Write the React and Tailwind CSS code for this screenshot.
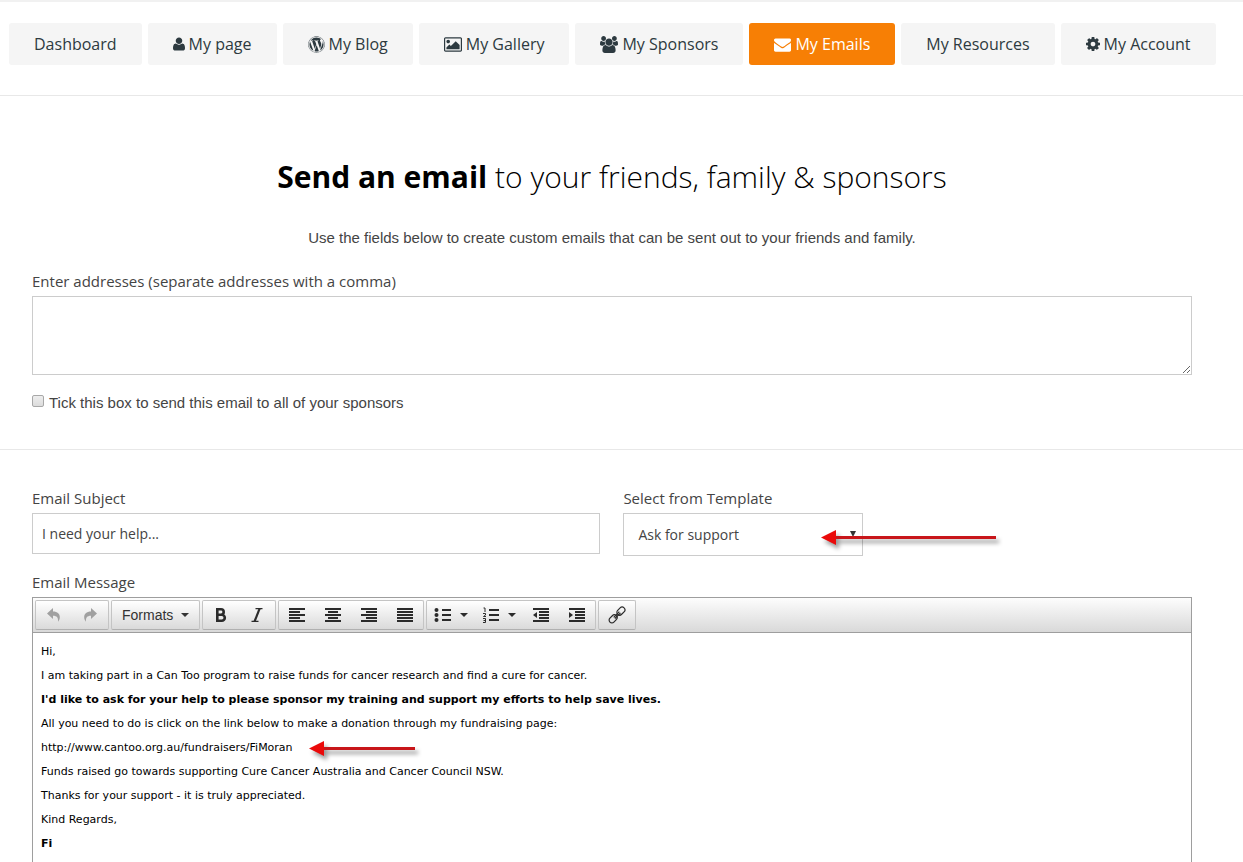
import React, { useState } from "react";
import { FaWordpress } from "react-icons/fa";

const UserIcon = () => (
  <svg viewBox="0 0 1408 1792" className="h-4 w-3" fill="currentColor" aria-hidden="true">
    <path d="M1408 1405q0 120-73 189.5t-194 69.5h-874q-121 0-194-69.5t-73-189.5q0-53 3.5-103.5t14-109 26.5-108.5 43-97.5 62-81 85.5-53.5 111.5-20q9 0 42 21.5t74.5 48 108 48 133.5 21.5 133.5-21.5 108-48 74.5-48 42-21.5q61 0 111.5 20t85.5 53.5 62 81 43 97.5 26.5 108.5 14 109 3.5 103.5zm-320-893q0 159-112.5 271.5t-271.5 112.5-271.5-112.5-112.5-271.5 112.5-271.5 271.5-112.5 271.5 112.5 112.5 271.5z" />
  </svg>
);

const PictureIcon = () => (
  <svg viewBox="-64 0 1920 1792" className="h-[17px] w-[18px]" fill="currentColor" aria-hidden="true">
    <path d="M576 576q0 80-56 136t-136 56-136-56-56-136 56-136 136-56 136 56 56 136zm1024 384v448h-1408v-192l320-320 160 160 512-512zm96-704h-1600q-13 0-22.5 9.5t-9.5 22.5v1216q0 13 9.5 22.5t22.5 9.5h1600q13 0 22.5-9.5t9.5-22.5v-1216q0-13-9.5-22.5t-22.5-9.5zm160 32v1216q0 66-47 113t-113 47h-1600q-66 0-113-47t-47-113v-1216q0-66 47-113t113-47h1600q66 0 113 47t47 113z" />
  </svg>
);

const GroupIcon = () => (
  <svg viewBox="0 0 1920 1792" className="h-[17px] w-[18px]" fill="currentColor" aria-hidden="true">
    <path d="M593 896q-162 5-265 128h-134q-82 0-138-40.5t-56-118.5q0-353 124-353 6 0 43.5 21t97.5 42.5 119 21.5q67 0 133-23-5 37-5 66 0 139 81 256zm1071 637q0 120-73 189.5t-194 69.5h-874q-121 0-194-69.5t-73-189.5q0-53 3.5-103.5t14-109 26.5-108.5 43-97.5 62-81 85.5-53.5 111.5-20q10 0 43 21.5t73 48 107 48 135 21.5 135-21.5 107-48 73-48 43-21.5q61 0 111.5 20t85.5 53.5 62 81 43 97.5 26.5 108.5 14 109 3.5 103.5zm-1024-1277q0 106-75 181t-181 75-181-75-75-181 75-181 181-75 181 75 75 181zm704 384q0 159-112.5 271.5t-271.5 112.5-271.5-112.5-112.5-271.5 112.5-271.5 271.5-112.5 271.5 112.5 112.5 271.5zm576 225q0 78-56 118.5t-138 40.5h-134q-103-123-265-128 81-117 81-256 0-29-5-66 66 23 133 23 59 0 119-21.5t97.5-42.5 43.5-21q124 0 124 353zm-128-609q0 106-75 181t-181 75-181-75-75-181 75-181 181-75 181 75 75 181z" />
  </svg>
);

const EnvelopeIcon = () => (
  <svg viewBox="0 0 1792 1792" className="h-[17px] w-[17px]" fill="currentColor" aria-hidden="true">
    <path d="M1792 710v794q0 66-47 113t-113 47h-1472q-66 0-113-47t-47-113v-794q44 49 101 87 362 246 497 345 57 42 92.5 65.5t94.5 48 110 24.5h2q51 0 110-24.5t94.5-48 92.5-65.5q170-123 498-345 57-39 100-87zm0-294q0 79-49 151t-122 123q-376 261-468 325-10 7-42.5 31t-54 38.5-52 32.5-57.5 27-50 9h-2q-23 0-50-9t-57.5-27-52-32.5-54-38.5-42.5-31q-91-64-262-182.5t-205-142.5q-62-42-117-115.5t-55-136.5q0-78 41.5-130t118.5-52h1472q65 0 112.5 47t47.5 113z" />
  </svg>
);

const CogIcon = () => (
  <svg viewBox="128 128 1536 1536" className="h-[14px] w-[14px]" fill="currentColor" aria-hidden="true">
    <path d="M1152 896q0-106-75-181t-181-75-181 75-75 181 75 181 181 75 181-75 75-181zm512-109v222q0 12-8 23t-20 13l-185 28q-19 54-39 91 35 50 107 138 10 12 10 25t-9 23q-27 37-99 108t-94 71q-12 0-26-9l-138-108q-44 23-91 38-16 136-29 186-7 28-36 28h-222q-14 0-24.5-8.5t-11.5-21.5l-28-184q-49-16-90-37l-141 107q-10 9-25 9-14 0-25-11-126-114-165-168-7-10-7-23 0-12 8-23 15-21 51-66.5t54-70.5q-27-50-41-99l-183-27q-13-2-21-12.5t-8-23.5v-222q0-12 8-23t19-13l186-28q14-46 39-92-40-57-107-138-10-12-10-24 0-10 9-23 26-36 98.5-107.5t94.5-71.5q13 0 26 10l138 107q44-23 91-38 16-136 29-186 7-28 36-28h222q14 0 24.5 8.5t11.5 21.5l28 184q49 16 90 37l142-107q9-9 24-9 13 0 25 10 129 119 165 170 7 8 7 22 0 12-8 23-15 21-51 66.5t-54 70.5q26 50 41 98l183 28q13 2 21 12.5t8 23.5z" />
  </svg>
);

const navItems = [
  { label: "Dashboard" },
  { label: "My page", icon: <UserIcon /> },
  { label: "My Blog", icon: <FaWordpress className="h-[17px] w-[17px]" /> },
  { label: "My Gallery", icon: <PictureIcon /> },
  { label: "My Sponsors", icon: <GroupIcon /> },
  { label: "My Emails", icon: <EnvelopeIcon />, active: true },
  { label: "My Resources" },
  { label: "My Account", icon: <CogIcon /> },
];

// Each bar is [x, y, width]
const Bars = ({ bars, children }) => (
  <svg viewBox="0 0 18 16" className="h-4 w-[18px] shrink-0" fill="currentColor" aria-hidden="true">
    {bars.map(([x, y, w]) => (
      <rect key={`${x}-${y}`} x={x} y={y} width={w} height="2" />
    ))}
    {children}
  </svg>
);

const Caret = () => (
  <svg viewBox="0 0 8 4" className="h-1 w-2 shrink-0" fill="currentColor" aria-hidden="true">
    <path d="M0 0h8L4 4z" />
  </svg>
);

const ToolGroup = ({ children }) => (
  <div className="flex h-[30px] rounded-xs border border-[#c4c4c4] border-b-[#b0b0b0] bg-linear-to-b from-white to-[#dadada]">
    {children}
  </div>
);

const ToolButton = ({ label, menu, disabled, children }) => (
  <button
    type="button"
    aria-label={label}
    disabled={disabled}
    className={`flex h-full items-center justify-center ${menu ? "w-12 gap-2" : "w-9"} ${
      disabled ? "text-[#a0a0a0]" : "text-[#2b2b2b]"
    }`}
  >
    {children}
    {menu && <Caret />}
  </button>
);

const Toolbar = () => (
  <div
    role="toolbar"
    aria-label="Formatting"
    className="flex flex-wrap gap-[2px] border-b border-[#9e9e9e] bg-linear-to-b from-[#fdfdfd] to-[#d9d9d9] p-[2px]"
  >
    <ToolGroup>
      <ToolButton label="Undo" disabled>
        <svg viewBox="0 0 16 16" className="h-4 w-4" fill="currentColor" aria-hidden="true">
          <path d="M7 1v3.6c4.500 0 7 2.400 6.800 6-.1 1.600-.7 3-1.800 4.200.4-4-1-6-5-6V12L1 6.500z" />
        </svg>
      </ToolButton>
      <ToolButton label="Redo" disabled>
        <svg viewBox="0 0 16 16" className="h-4 w-4" fill="currentColor" aria-hidden="true">
          <path d="M9 1v3.6c-4.500 0-7 2.400-6.800 6 .1 1.600.7 3 1.800 4.200-.4-4 1-6 5-6V12l6-5.500z" />
        </svg>
      </ToolButton>
    </ToolGroup>
    <ToolGroup>
      <button
        type="button"
        className="flex h-full items-center gap-2 px-[10px] font-['Liberation_Sans',sans-serif] text-sm text-[#333]"
      >
        Formats
        <Caret />
      </button>
    </ToolGroup>
    <ToolGroup>
      <ToolButton label="Bold">
        <svg viewBox="0 0 16 16" className="h-4 w-4" fill="none" stroke="currentColor" strokeWidth="2.6" aria-hidden="true">
          <path d="M4.300 2.300H8a2.700 2.700 0 0 1 0 5.400H4.300zM4.300 7.700h4.500a3 3 0 0 1 0 6H4.300z" />
        </svg>
      </ToolButton>
      <ToolButton label="Italic">
        <svg viewBox="0 0 16 16" className="h-4 w-4" fill="none" stroke="currentColor" aria-hidden="true">
          <path strokeWidth="1.200" d="M6.500 1.600h7M2.500 14.400h7" />
          <path strokeWidth="2.200" d="M10.600 1.600 5.600 14.400" />
        </svg>
      </ToolButton>
    </ToolGroup>
    <ToolGroup>
      <ToolButton label="Align left">
        <Bars bars={[[1, 1, 16], [1, 4, 11], [1, 7, 16], [1, 10, 11], [1, 13, 16]]} />
      </ToolButton>
      <ToolButton label="Align center">
        <Bars bars={[[1, 1, 16], [4, 4, 10], [1, 7, 16], [4, 10, 10], [1, 13, 16]]} />
      </ToolButton>
      <ToolButton label="Align right">
        <Bars bars={[[1, 1, 16], [6, 4, 11], [1, 7, 16], [6, 10, 11], [1, 13, 16]]} />
      </ToolButton>
      <ToolButton label="Justify">
        <Bars bars={[[1, 1, 16], [1, 4, 16], [1, 7, 16], [1, 10, 16], [1, 13, 16]]} />
      </ToolButton>
    </ToolGroup>
    <ToolGroup>
      <ToolButton label="Bullet list" menu>
        <Bars bars={[[8, 2, 9], [8, 7, 9], [8, 12, 9]]}>
          <circle cx="2.500" cy="3" r="2" />
          <circle cx="2.500" cy="8" r="2" />
          <circle cx="2.500" cy="13" r="2" />
        </Bars>
      </ToolButton>
      <ToolButton label="Numbered list" menu>
        <Bars bars={[[7, 2, 10], [7, 7, 10], [7, 12, 10]]}>
          <path
            fill="none"
            stroke="currentColor"
            d="M1.500 1H3v4M1 6.500h2.500V8L1.500 9.500H4M1 11.500h2.500v4H1M1.500 13.500h2"
          />
        </Bars>
      </ToolButton>
      <ToolButton label="Decrease indent">
        <Bars bars={[[1, 1, 16], [7, 4, 10], [7, 7, 10], [7, 10, 10], [1, 13, 16]]}>
          <path d="M5 5v6L1 8z" />
        </Bars>
      </ToolButton>
      <ToolButton label="Increase indent">
        <Bars bars={[[1, 1, 16], [7, 4, 10], [7, 7, 10], [7, 10, 10], [1, 13, 16]]}>
          <path d="M1 5v6l4-3z" />
        </Bars>
      </ToolButton>
    </ToolGroup>
    <ToolGroup>
      <ToolButton label="Insert link">
        <svg viewBox="0 0 18 18" className="h-[18px] w-[18px]" fill="none" stroke="currentColor" strokeWidth="1.200" aria-hidden="true">
          <g transform="rotate(-45 9 9)">
            <rect x="-1" y="6.200" width="9" height="5.600" rx="2.800" />
            <rect x="10" y="6.200" width="9" height="5.600" rx="2.800" />
            <path d="M5 8.300h8M5 9.900h8" />
          </g>
        </svg>
      </ToolButton>
    </ToolGroup>
  </div>
);

// The tip is on the left, the shaft takes the rest of the width
const RedArrow = ({ className }) => (
  <span className={`pointer-events-none flex items-center drop-shadow-[3px_4px_2px_rgba(0,0,0,0.4)] ${className}`}>
    <svg viewBox="0 0 15 15" className="h-[15px] w-[15px] shrink-0" fill="#ea0a0a" aria-hidden="true">
      <path d="M0 7.500 15 0v15z" />
    </svg>
    <span className="h-[3px] flex-1 bg-[#c8161a]" />
  </span>
);

const App = () => {
  const [addresses, setAddresses] = useState("");
  const [sendToAll, setSendToAll] = useState(false);
  const [subject, setSubject] = useState("I need your help...");
  const [template, setTemplate] = useState("support");

  return (
    <div className="flex min-h-screen flex-col border-t-2 border-[#f1f1f1] bg-white font-['Open_Sans',sans-serif] text-[15px] text-[#444]">
      <nav className="flex flex-wrap gap-[6px] border-b border-[#e8e8e8] pt-[21px] pr-5 pb-[30px] pl-[9px]">
        {navItems.map((item) => (
          <a
            key={item.label}
            href="#"
            className={`flex h-[42px] items-center gap-1 rounded-[3px] px-[25px] text-base ${
              item.active ? "bg-[#f77f05] text-white" : "bg-[#f5f5f5] text-[#2d3a40]"
            }`}
          >
            {item.icon}
            {item.label}
          </a>
        ))}
      </nav>

      <section className="border-b border-[#e8e8e8] pt-[60px] pr-[51px] pb-9 pl-8">
        <h1 className="text-center text-[30px] leading-[42px] font-light text-black">
          <strong className="font-bold">Send an email</strong> to your friends, family &amp; sponsors
        </h1>
        <p className="mt-[30px] text-center font-['Liberation_Sans',sans-serif] leading-5">
          Use the fields below to create custom emails that can be sent out to your friends and family.
        </p>
        <label htmlFor="addresses" className="mt-[23px] block leading-5">
          Enter addresses (separate addresses with a comma)
        </label>
        <textarea
          id="addresses"
          value={addresses}
          onChange={(e) => setAddresses(e.target.value)}
          className="mt-[5px] block h-[79px] w-full border border-[#ccc] p-2"
        />
        <div className="mt-[18px] flex items-center gap-[5px] font-['Liberation_Sans',sans-serif] leading-5">
          <input
            id="send-all"
            type="checkbox"
            checked={sendToAll}
            onChange={(e) => setSendToAll(e.target.checked)}
            className="mb-1 h-3 w-3 appearance-none rounded-xs border border-[#a8a8a8] bg-linear-to-b from-[#eee] to-[#dcdcdc] checked:from-[#888] checked:to-[#666]"
          />
          <label htmlFor="send-all">Tick this box to send this email to all of your sponsors</label>
        </div>
      </section>

      <section className="flex flex-1 flex-col pt-[38px] pr-[51px] pl-8">
        <div className="flex items-start gap-[23px]">
          <div className="w-[49%]">
            <label htmlFor="subject" className="block leading-5">Email Subject</label>
            <input
              id="subject"
              type="text"
              value={subject}
              onChange={(e) => setSubject(e.target.value)}
              className="mt-[5px] block h-[41px] w-full border border-[#ccc] px-[9px] text-sm"
            />
          </div>
          <div className="relative w-60">
            <label htmlFor="template" className="block leading-5">Select from Template</label>
            <select
              id="template"
              value={template}
              onChange={(e) => setTemplate(e.target.value)}
              className="mt-[5px] block h-[43px] w-full appearance-none border border-[#ccc] bg-white px-[14px] text-sm"
            >
              <option value="support">Ask for support</option>
              <option value="thanks">Say thank you</option>
            </select>
            <svg viewBox="0 0 8 6" className="absolute right-[6px] bottom-[19px] h-[6px] w-2" fill="#333" aria-hidden="true">
              <path d="M1 0h6L4 6z" />
            </svg>
            <RedArrow className="absolute bottom-[11px] left-[198px] w-[175px]" />
          </div>
        </div>

        <p id="message-label" className="mt-4 leading-5">Email Message</p>
        <div className="mt-[5px] flex flex-1 flex-col border border-b-0 border-[#9e9e9e]">
          <Toolbar />
          <div
            role="textbox"
            aria-multiline="true"
            aria-labelledby="message-label"
            tabIndex={0}
            className="flex-1 px-2 pt-[7px] font-['DejaVu_Sans',Verdana,sans-serif] text-[11px] leading-6 text-black"
          >
            <p>Hi,</p>
            <p>I am taking part in a Can Too program to raise funds for cancer research and find a cure for cancer.</p>
            <p className="font-bold">
              I'd like to ask for your help to please sponsor my training and support my efforts to help save lives.
            </p>
            <p>All you need to do is click on the link below to make a donation through my fundraising page:</p>
            <p className="flex items-center gap-4">
              http://www.cantoo.org.au/fundraisers/FiMoran
              <RedArrow className="w-[106px]" />
            </p>
            <p>Funds raised go towards supporting Cure Cancer Australia and Cancer Council NSW.</p>
            <p>Thanks for your support - it is truly appreciated.</p>
            <p>Kind Regards,</p>
            <p className="font-bold">Fi</p>
          </div>
        </div>
      </section>
    </div>
  );
};

export default App;
